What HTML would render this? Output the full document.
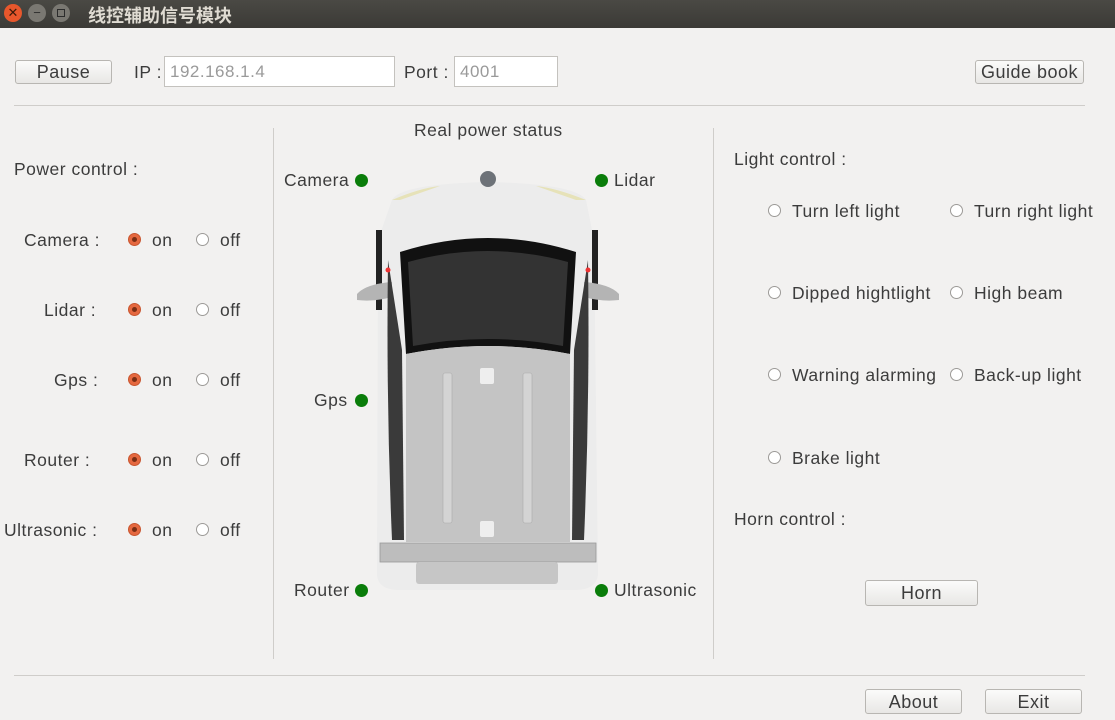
<!DOCTYPE html>
<html><head><meta charset="utf-8"><style>
body{margin:0;width:1115px;height:720px;background:#f2f1f0;font-family:"Liberation Sans","Noto Sans CJK SC",sans-serif;font-size:17.5px;letter-spacing:0.5px;color:#3c3c3c;position:relative;overflow:hidden}
.a{position:absolute;white-space:nowrap}
.title{position:absolute;left:0;top:0;width:1115px;height:28px;background:linear-gradient(#4a4944,#3b3a36)}
.btn{position:absolute;border:1px solid #b8b6b2;border-radius:3px;background:linear-gradient(#fbfbfa,#e8e7e5);text-align:center;font-size:18px;color:#3c3c3c;box-sizing:border-box}
.inp{position:absolute;border:1px solid #c4c2be;background:#fff;color:#9a9a9a;box-sizing:border-box;padding-left:5px;font-size:17px}
.hr{position:absolute;height:1px;background:#cfcdca}
.vr{position:absolute;width:1px;background:#cfcdca}
.ron{position:absolute;width:13px;height:13px;border-radius:50%;background:#e5683f;box-sizing:border-box;border:1px solid #c8552f}
.ron:after{content:"";position:absolute;left:3px;top:3px;width:5px;height:5px;border-radius:50%;background:#7a2e14}
.roff{position:absolute;width:13px;height:13px;border-radius:50%;background:#fff;border:1px solid #9c9a97;box-sizing:border-box}
.dot{position:absolute;width:13px;height:13px;border-radius:50%;background:#0a7d0a}
</style></head><body>
<div class="title"></div>
<div class="a" style="left:4px;top:4px;width:18px;height:18px;border-radius:50%;background:#e8572c;color:#3a1a0a;font-size:13px;text-align:center;line-height:18px;letter-spacing:0">✕</div>
<div class="a" style="left:28px;top:4px;width:18px;height:18px;border-radius:50%;background:#7a7872;color:#2c2c2c;font-size:13px;text-align:center;line-height:17px;letter-spacing:0">−</div>
<div class="a" style="left:52px;top:4px;width:18px;height:18px;border-radius:50%;background:#7a7872"><div style="position:absolute;left:5px;top:5px;width:6px;height:6px;border:1px solid #2c2c2c"></div></div>
<div class="a" style="left:88px;top:2px;color:#dfdbd2;font-size:18px;font-weight:bold;letter-spacing:0">线控辅助信号模块</div>

<div class="btn" style="left:15px;top:60px;width:97px;height:24px;line-height:22px">Pause</div>
<div class="a" style="left:134px;top:62px">IP :</div>
<div class="inp" style="left:164px;top:56px;width:231px;height:31px;line-height:30px">192.168.1.4</div>
<div class="a" style="left:404px;top:62px">Port :</div>
<div class="inp" style="left:454px;top:56px;width:104px;height:31px;line-height:30px">4001</div>
<div class="btn" style="left:975px;top:60px;width:109px;height:24px;line-height:22px">Guide book</div>
<div class="hr" style="left:14px;top:105px;width:1071px"></div>
<div class="hr" style="left:14px;top:675px;width:1071px"></div>
<div class="vr" style="left:273px;top:128px;height:531px"></div>
<div class="vr" style="left:713px;top:128px;height:531px"></div>

<div class="a" style="left:14px;top:159px">Power control :</div>
<div class="a" style="left:24px;top:230px">Camera :</div>
<div class="a" style="left:44px;top:300px">Lidar :</div>
<div class="a" style="left:54px;top:370px">Gps :</div>
<div class="a" style="left:24px;top:450px">Router :</div>
<div class="a" style="left:4px;top:520px">Ultrasonic :</div>
<div class="ron" style="left:128px;top:233px"></div><div class="a" style="left:152px;top:230px">on</div><div class="roff" style="left:196px;top:233px"></div><div class="a" style="left:220px;top:230px">off</div>
<div class="ron" style="left:128px;top:303px"></div><div class="a" style="left:152px;top:300px">on</div><div class="roff" style="left:196px;top:303px"></div><div class="a" style="left:220px;top:300px">off</div>
<div class="ron" style="left:128px;top:373px"></div><div class="a" style="left:152px;top:370px">on</div><div class="roff" style="left:196px;top:373px"></div><div class="a" style="left:220px;top:370px">off</div>
<div class="ron" style="left:128px;top:453px"></div><div class="a" style="left:152px;top:450px">on</div><div class="roff" style="left:196px;top:453px"></div><div class="a" style="left:220px;top:450px">off</div>
<div class="ron" style="left:128px;top:523px"></div><div class="a" style="left:152px;top:520px">on</div><div class="roff" style="left:196px;top:523px"></div><div class="a" style="left:220px;top:520px">off</div>

<div class="a" style="left:414px;top:120px">Real power status</div>
<div class="a" style="left:284px;top:170px">Camera</div><div class="dot" style="left:355px;top:174px"></div>
<div class="dot" style="left:595px;top:174px"></div><div class="a" style="left:614px;top:170px">Lidar</div>
<div class="a" style="left:314px;top:390px">Gps</div><div class="dot" style="left:355px;top:394px"></div>
<div class="a" style="left:294px;top:580px">Router</div><div class="dot" style="left:355px;top:584px"></div>
<div class="dot" style="left:595px;top:584px"></div><div class="a" style="left:614px;top:580px">Ultrasonic</div>

<svg class="a" style="left:340px;top:160px" width="300" height="440" viewBox="340 160 300 440">
<path d="M392,200 Q400,184 488,182 Q576,184 586,200 L594,240 L598,575 Q596,590 575,590 L400,590 Q378,590 377,575 L378,240Z" fill="#ececec"/>
<path d="M392,200 Q420,188 440,186 L400,200Z" fill="#e6e2b8"/>
<path d="M586,200 Q556,188 536,186 L576,200Z" fill="#e6e2b8"/>
<rect x="376" y="230" width="6" height="80" fill="#222"/><rect x="592" y="230" width="6" height="80" fill="#222"/>
<path d="M392,282 Q366,284 357,294 L357,300 Q374,302 392,297Z" fill="#b4b4b4"/>
<path d="M584,282 Q610,284 619,294 L619,300 Q602,302 584,297Z" fill="#b4b4b4"/>
<path d="M388,260 L402,350 L404,540 L392,540 Q386,400 388,260Z" fill="#3a3a3a"/>
<path d="M588,260 L574,350 L572,540 L584,540 Q590,400 588,260Z" fill="#3a3a3a"/>
<path d="M400,252 Q488,224 576,252 L570,354 Q488,338 406,354Z" fill="#111"/>
<path d="M408,262 Q488,240 568,262 L563,346 Q488,332 413,346Z" fill="#333"/>
<path d="M406,354 Q488,338 570,354 L570,542 L406,542Z" fill="#c4c4c4"/>
<rect x="443" y="373" width="9" height="150" rx="2" fill="#d4d4d4" stroke="#aaa" stroke-width="0.6"/>
<rect x="523" y="373" width="9" height="150" rx="2" fill="#d4d4d4" stroke="#aaa" stroke-width="0.6"/>
<rect x="480" y="368" width="14" height="16" rx="2" fill="#eee"/>
<rect x="480" y="521" width="14" height="16" rx="2" fill="#eee"/>
<rect x="380" y="543" width="216" height="19" fill="#bdbdbd" stroke="#999" stroke-width="0.8"/>
<rect x="416" y="562" width="142" height="22" rx="3" fill="#c6c6c6"/>
<circle cx="488" cy="179" r="8" fill="#6d7278"/>
<circle cx="388" cy="270" r="2.5" fill="#e33"/><circle cx="588" cy="270" r="2.5" fill="#e33"/>
</svg>

<div class="a" style="left:734px;top:149px">Light control :</div>
<div class="roff" style="left:768px;top:204px"></div><div class="a" style="left:792px;top:201px">Turn left light</div>
<div class="roff" style="left:950px;top:204px"></div><div class="a" style="left:974px;top:201px">Turn right light</div>
<div class="roff" style="left:768px;top:286px"></div><div class="a" style="left:792px;top:283px">Dipped hightlight</div>
<div class="roff" style="left:950px;top:286px"></div><div class="a" style="left:974px;top:283px">High beam</div>
<div class="roff" style="left:768px;top:368px"></div><div class="a" style="left:792px;top:365px">Warning alarming</div>
<div class="roff" style="left:950px;top:368px"></div><div class="a" style="left:974px;top:365px">Back-up light</div>
<div class="roff" style="left:768px;top:451px"></div><div class="a" style="left:792px;top:448px">Brake light</div>
<div class="a" style="left:734px;top:509px">Horn control :</div>
<div class="btn" style="left:865px;top:580px;width:113px;height:26px;line-height:24px">Horn</div>
<div class="btn" style="left:865px;top:689px;width:97px;height:25px;line-height:24px">About</div>
<div class="btn" style="left:985px;top:689px;width:97px;height:25px;line-height:24px">Exit</div>
</body></html>
